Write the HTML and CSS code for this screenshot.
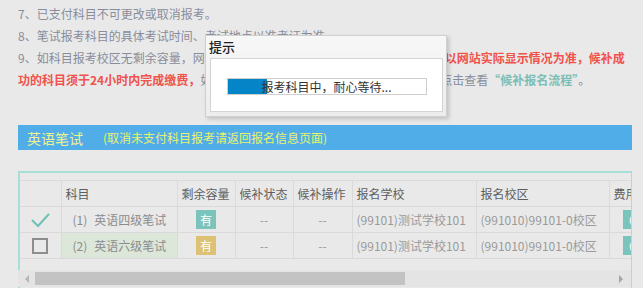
FILE: index.html
```html
<!DOCTYPE html>
<html lang="zh-CN">
<head>
    <meta charset="UTF-8">
    <meta name="viewport" content="width=device-width, initial-scale=1.0">
    <title>报名确认</title>
    <link rel="stylesheet" href="styles.css">
</head>
<body>
    <div class="page">
        <div class="notes">
            <p>7、已支付科目不可更改或取消报考。</p>
            <p>8、笔试报考科目的具体考试时间、考试地点以准考证为准。</p>
            <p>9、如科目报考校区无剩余容量，网上报名将为考生开启候补报名功能，候补结果<span class="warn">以网站实际显示情况为准，候补成</span><br><span class="warn">功的科目须于24小时内完成缴费，</span>如需了解候补相关规则，请在报名信息页面中点击查看<span class="link">“候补报名流程”</span>。</p>
        </div>

        <div class="section_bar">
            <span class="section_title">英语笔试</span>
            <span class="section_tip">(取消未支付科目报考请返回报名信息页面)</span>
        </div>

        <div class="grid_box">
            <div class="grid_view">
                <table class="grid">
                    <colgroup>
                        <col style="width:41px"><col style="width:116px"><col style="width:58px"><col style="width:58px">
                        <col style="width:59px"><col style="width:124px"><col style="width:133px"><col style="width:60px">
                    </colgroup>
                    <thead>
                        <tr>
                            <th></th><th>科目</th><th>剩余容量</th><th>候补状态</th><th>候补操作</th><th>报名学校</th><th>报名校区</th><th>费用</th>
                        </tr>
                    </thead>
                    <tbody>
                        <tr>
                            <td class="center">
                                <svg class="check" width="20" height="16" viewBox="0 0 20 16"><polyline points="2,8 8,14 19,2" fill="none" stroke="#6fc0b6" stroke-width="2"/></svg>
                            </td>
                            <td class="subject"><span class="num">(1)</span>英语四级笔试</td>
                            <td class="center"><span class="badge badge_green">有</span></td>
                            <td class="center">--</td>
                            <td class="center">--</td>
                            <td>(99101)测试学校101</td>
                            <td>(991010)99101-0校区</td>
                            <td class="fee"><span class="badge badge_green">0</span></td>
                        </tr>
                        <tr>
                            <td class="center"><span class="box"></span></td>
                            <td class="subject picked"><span class="num">(2)</span>英语六级笔试</td>
                            <td class="center"><span class="badge badge_yellow">有</span></td>
                            <td class="center">--</td>
                            <td class="center">--</td>
                            <td>(99101)测试学校101</td>
                            <td>(991010)99101-0校区</td>
                            <td class="fee"><span class="badge badge_green">0</span></td>
                        </tr>
                    </tbody>
                </table>
            </div>
            <div class="hscroll">
                <span class="arrow arrow_left"></span>
                <span class="thumb"></span>
                <span class="arrow arrow_right"></span>
            </div>
        </div>

        <div class="dialog">
            <div class="dialog_title">提示</div>
            <div class="dialog_body">
                <div class="progress">
                    <div class="progress_fill"></div>
                    <div class="progress_text">报考科目中，耐心等待...</div>
                </div>
            </div>
        </div>
    </div>
</body>
</html>
```

FILE: styles.css
```css
body {
    margin: 0;
    background-color: #ffffff;
    font-family: "Microsoft YaHei", "Noto Sans CJK SC", sans-serif;
    font-size: 12px;
}

.page {
    position: relative;
    height: 288px;
    padding: 3px 11px 0 18px;
    box-sizing: border-box;
    background-color: #e9e9e9;
    overflow: hidden;
}

.notes p {
    margin: 0;
    line-height: 22px;
    color: #898d9b;
    white-space: nowrap;
}

.warn {
    color: #f0524c;
    font-weight: bold;
}

.link {
    color: #7cbeb5;
    font-weight: bold;
}

.section_bar {
    margin-top: 34px;
    height: 25px;
    padding-left: 9px;
    display: flex;
    align-items: center;
    background-color: #50ade8;
    color: #f1f28e;
}

.section_title {
    font-size: 14px;
    margin-right: 20px;
}

.section_tip {
    color: #e9f26c;
}

.grid_box {
    margin-top: 21px;
    border: 2px solid #a7dfd6;
    border-bottom: 0;
    border-right-width: 1px;
    padding-top: 7px;
    height: 117px;
    box-sizing: border-box;
    display: flex;
    flex-direction: column;
}

.grid_view {
    overflow: hidden;
    flex: 1;
}

.grid {
    table-layout: fixed;
    width: 649px;
    border-collapse: collapse;
}

.grid th,
.grid td {
    border: 1px solid #dadada;
    padding: 0 4px;
    height: 25px;
    white-space: nowrap;
    overflow: hidden;
    text-align: left;
}

.grid th:first-child,
.grid td:first-child {
    border-left: 0;
}

.grid th {
    color: #5e5e5e;
    font-weight: normal;
}

.grid td {
    color: #9a9a9a;
}

.grid .center {
    text-align: center;
}

.grid .subject {
    padding-left: 11px;
    color: #8c8c8c;
}

.num {
    margin-right: 7px;
}

.grid .picked {
    background-color: #dce7da;
}

.grid .fee {
    padding-left: 13px;
}

.check {
    display: block;
    margin: 0 auto;
}

.box {
    display: block;
    width: 12px;
    height: 12px;
    margin: 0 auto;
    border: 2px solid #8d8d8d;
}

.badge {
    display: inline-block;
    width: 20px;
    height: 19px;
    line-height: 19px;
    text-align: center;
    color: #ffffff;
}

.badge_green {
    background-color: #7bc4bc;
}

.badge_yellow {
    background-color: #dcc272;
}

.hscroll {
    height: 17px;
    margin-bottom: 1px;
    margin-left: -2px;
    background-color: #e4e4e4;
    display: flex;
    align-items: center;
}

.thumb {
    width: 370px;
    height: 13px;
    background-color: #c3c3c3;
}

.arrow {
    width: 0;
    height: 0;
    border-top: 4px solid transparent;
    border-bottom: 4px solid transparent;
    margin: 0 6px;
}

.arrow_left {
    border-right: 4px solid #b5b5b5;
    margin-left: 7px;
}

.arrow_right {
    border-left: 4px solid #a5a5a5;
    margin-left: auto;
    margin-right: 8px;
}

.dialog {
    position: absolute;
    left: 205px;
    top: 35px;
    width: 242px;
    height: 82px;
    box-sizing: border-box;
    padding: 0 3px 4px 4px;
    border: 1px solid #d0d0d0;
    background: linear-gradient(#f7f7f7, #ececec);
    box-shadow: 2px 2px 4px rgba(0, 0, 0, 0.18);
    display: flex;
    flex-direction: column;
}

.dialog_title {
    height: 22px;
    line-height: 22px;
    font-size: 13px;
    color: #222222;
    font-weight: 500;
    margin-left: -1px;
}

.dialog_body {
    flex: 1;
    background-color: #ffffff;
    border: 1px solid #d3d3d3;
    display: flex;
    align-items: center;
    justify-content: center;
}

.progress {
    position: relative;
    width: 200px;
    height: 17px;
    box-sizing: border-box;
    border: 1px solid #cfcfcf;
    margin-top: 2px;
}

.progress_fill {
    width: 39px;
    height: 100%;
    background-color: #0584c8;
}

.progress_text {
    position: absolute;
    left: 0;
    right: 0;
    top: 0;
    line-height: 15px;
    text-align: center;
    color: #333333;
    font-size: 12px;
}
```
